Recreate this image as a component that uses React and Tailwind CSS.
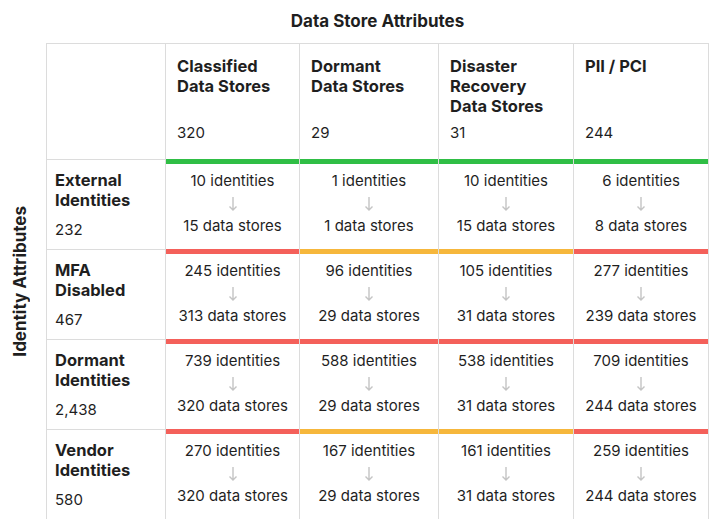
import React from "react";

const columns = [
  { title: ["Classified", "Data Stores"], count: "320" },
  { title: ["Dormant", "Data Stores"], count: "29" },
  { title: ["Disaster", "Recovery", "Data Stores"], count: "31" },
  { title: ["PII / PCI"], count: "244" },
];

const barColor = {
  green: "bg-[#2fbe45]",
  red: "bg-[#f4605a]",
  yellow: "bg-[#f6b73c]",
};

const rows = [
  {
    label: ["External", "Identities"],
    count: "232",
    cells: [
      ["10", "15", "green"],
      ["1", "1", "green"],
      ["10", "15", "green"],
      ["6", "8", "green"],
    ],
  },
  {
    label: ["MFA", "Disabled"],
    count: "467",
    cells: [
      ["245", "313", "red"],
      ["96", "29", "yellow"],
      ["105", "31", "yellow"],
      ["277", "239", "red"],
    ],
  },
  {
    label: ["Dormant", "Identities"],
    count: "2,438",
    cells: [
      ["739", "320", "red"],
      ["588", "29", "red"],
      ["538", "31", "red"],
      ["709", "244", "red"],
    ],
  },
  {
    label: ["Vendor", "Identities"],
    count: "580",
    cells: [
      ["270", "320", "red"],
      ["167", "29", "yellow"],
      ["161", "31", "yellow"],
      ["259", "244", "red"],
    ],
  },
];

const DownArrow = () => (
  <svg width="10" height="17" viewBox="0 0 10 17" className="my-[4px]">
    <path d="M5 2 V15 M1.5 11.5 L5 15 L8.5 11.5" fill="none" stroke="#c4c4c4" strokeWidth="1.4" />
  </svg>
);

const App = () => {
  return (
    <div
      className="w-[709px] h-[519px] bg-white text-[#1f1f1f] overflow-hidden"
      style={{ fontFamily: "Inter, 'Liberation Sans', sans-serif" }}
    >
      <div className="flex">
        {/* vertical axis label */}
        <div className="w-[46px] flex justify-start pl-[9px] pt-[206px]">
          <span className="[writing-mode:vertical-rl] rotate-180 text-[17px] leading-[22px] font-bold whitespace-nowrap h-fit">
            Identity Attributes
          </span>
        </div>

        <div className="flex flex-col">
          <div className="h-[43px] flex items-center justify-center text-[17px] font-bold">
            Data Store Attributes
          </div>

          <div className="grid grid-cols-[119px_134px_139px_135px_135px] border-t border-l border-[#dcdcdc]">
            {/* header row */}
            <div className="h-[115px] border-r border-[#dcdcdc]" />
            {columns.map((c, i) => (
              <div
                key={i}
                className="h-[115px] border-r border-[#dcdcdc] pl-[11px] pt-[12px] flex flex-col"
              >
                <div className="text-[16.5px] font-bold leading-[20px]">
                  {c.title.map((t) => (
                    <div key={t}>{t}</div>
                  ))}
                </div>
                <div className="mt-auto mb-[16px] text-[15px] leading-[20px]">{c.count}</div>
              </div>
            ))}

            {/* body rows */}
            {rows.map((r, ri) => (
              <React.Fragment key={ri}>
                <div className="h-[90px] border-t border-r border-[#dcdcdc] pl-[8px] pt-[10px] flex flex-col">
                  <div className="text-[16.5px] font-bold leading-[20px]">
                    {r.label.map((t) => (
                      <div key={t}>{t}</div>
                    ))}
                  </div>
                  <div className="mt-[10px] text-[15px] leading-[20px]">{r.count}</div>
                </div>
                {r.cells.map(([ids, stores, color], ci) => (
                  <div key={ci} className="h-[90px] border-r border-[#dcdcdc] flex flex-col">
                    <div className={`h-[5px] ${barColor[color]}`} />
                    <div className="flex flex-col items-center pt-[7px] text-[15px] leading-[20px]">
                      <div>{ids} identities</div>
                      <DownArrow />
                      <div>{stores} data stores</div>
                    </div>
                  </div>
                ))}
              </React.Fragment>
            ))}
          </div>
        </div>
      </div>
    </div>
  );
};

export default App;
